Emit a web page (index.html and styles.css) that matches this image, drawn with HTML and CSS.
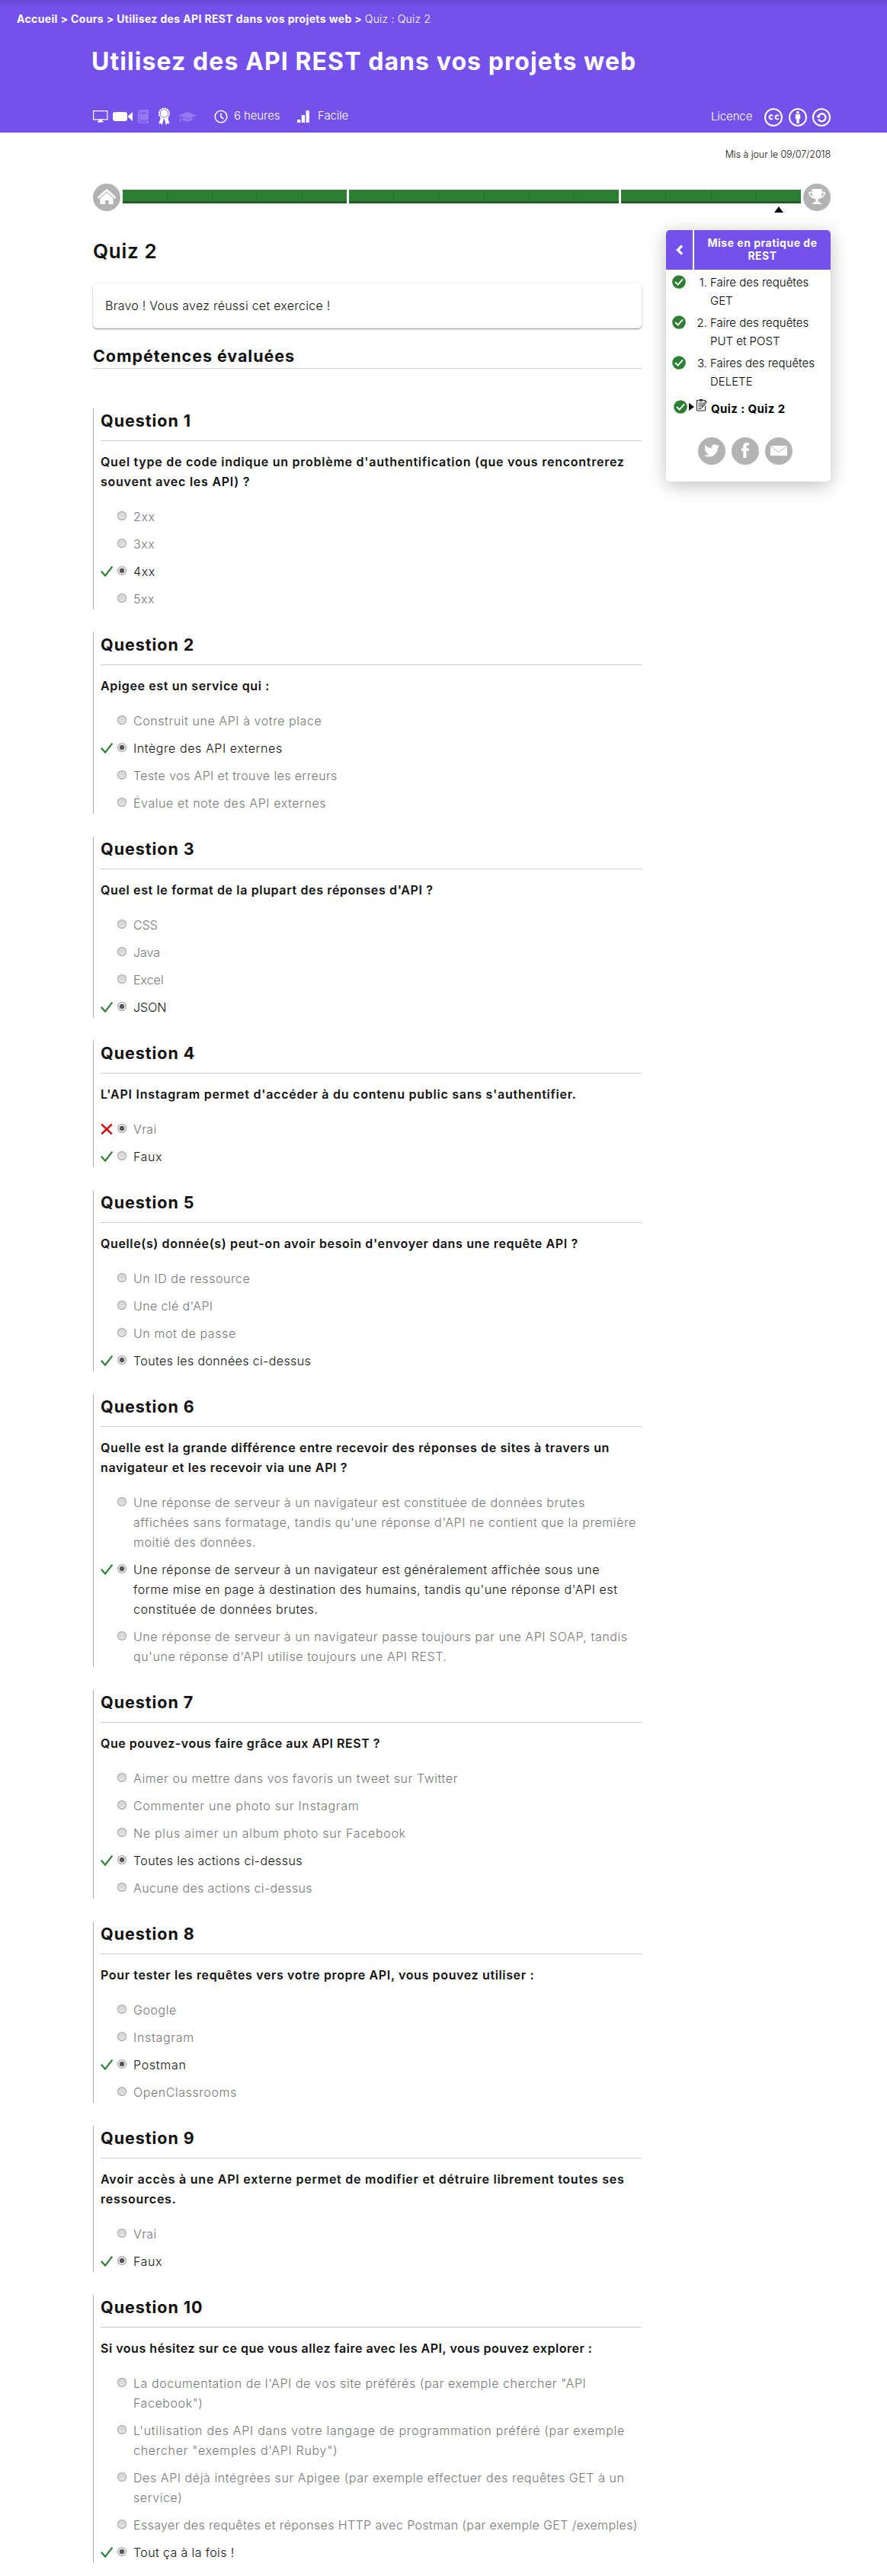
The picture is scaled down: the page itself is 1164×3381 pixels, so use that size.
FILE: index.html
```html
<!DOCTYPE html>
<html lang="fr">
<head>
<meta charset="utf-8">
<title>Quiz 2</title>
<link rel="stylesheet" href="styles.css">
</head>
<body>
<svg class="sprite" aria-hidden="true">
  <symbol id="check" viewBox="0 0 16 14"><path d="M.8 6.8 6 12.600 15.400.6" fill="none" stroke="#2c7f32" stroke-width="2.200"/></symbol>
  <symbol id="cross" viewBox="0 0 16 14"><path d="M1.200.6 14.800 13.400M14.800.6 1.200 13.400" fill="none" stroke="#d30d0d" stroke-width="2.600"/></symbol>
  <symbol id="done" viewBox="0 0 18 18"><circle cx="9" cy="9" r="8.800" fill="#2c7f32"/><path d="m4 9 3.700 3.600L14 5.400" fill="none" stroke="#fff" stroke-width="1.900"/></symbol>
</svg>
<header class="hero">
  <nav class="crumbs"><b>Accueil &gt; Cours &gt; Utilisez des API REST dans vos projets web &gt; </b><span>Quiz : Quiz 2</span></nav>
  <h1 class="course-title">Utilisez des API REST dans vos projets web</h1>
  <div class="meta">
    <svg width="20" height="18" viewBox="0 0 20 18"><path d="M.6 1.600h18.300v11.200H.6z" fill="none" stroke="#fff" stroke-width="1.200"/><path d="M7.500 13h4.500v2h1.500v1.500H6V15h1.500z" fill="#fff"/></svg>
    <svg class="m-video" width="27" height="12" viewBox="0 0 27 12"><rect width="19" height="12" rx="3" fill="#fff"/><path d="M26 0v12l-6-5.500v-1z" fill="#fff"/></svg>
    <svg class="m-book" width="15" height="18" viewBox="0 0 15 18" fill="#9479f0"><path d="M2.500 0H14v13.500H2.500z"/><path d="M0 2.500Q0 0 2 0v14.500H0z"/><path d="M4.500 3.500h6.500v1.800H4.500z" fill="#7451eb"/><path d="M0 14.500h14V18H2q-2 0-2-2zm2 1v1.300h10v-1.300z" fill-rule="evenodd"/></svg>
    <svg class="m-award" width="18" height="24" viewBox="0 0 18 24"><path d="M4 13 1.200 21.500l2.800-.7L5.500 23.500 8.200 14.500h.6l2 9 1.700-2.700 3 .7L13 13z" fill="#fff"/><circle cx="8.500" cy="8" r="6.400" fill="#fff"/><circle cx="8.500" cy="8" r="6.800" fill="none" stroke="#fff" stroke-width="1.600" stroke-dasharray="2.500 1.060"/><circle cx="8.500" cy="8" r="5.200" fill="none" stroke="#7451eb" stroke-width=".8"/></svg>
    <svg class="m-cap" width="24" height="15" viewBox="0 0 24 15" fill="#9479f0"><path d="m12 1 12 4.500L12 10 0 5.500z"/><path d="M5.500 8.300 12 10.800l6.500-2.500V12Q15 11.500 12 14 9 11.500 5.500 12zM2.500 6.500h1V12l.8 2H2z"/></svg>
    <svg class="m-clock" width="18" height="18" viewBox="0 0 18 18" fill="none" stroke="#fff" stroke-width="1.600"><circle cx="9" cy="9" r="7.800"/><path d="M9 4.500V9.500l3.200 2.500"/></svg>
    <span class="m-time">6 heures</span>
    <svg class="m-bars" width="16" height="16" viewBox="0 0 16 16" fill="#fff"><path d="M0 12h4.300v4H0zM5.800 6h4.300v10H5.800zM11.500 0h4.300v16h-4.300z"/></svg>
    <span class="m-level">Facile</span>
    <span class="m-lic">Licence</span>
    <svg class="m-cc" width="24" height="24" viewBox="0 0 24 24" fill="none" stroke="#fff" stroke-width="2"><circle cx="12" cy="12" r="11"/><path d="M11 10a2.600 2.600 0 1 0 0 3.600M19 10a2.600 2.600 0 1 0 0 3.600"/></svg>
    <svg class="m-cc" width="24" height="24" viewBox="0 0 24 24"><circle cx="12" cy="12" r="11" fill="none" stroke="#fff" stroke-width="2"/><circle cx="12" cy="5.600" r="1.900" fill="#fff"/><path d="M8.800 8h6.400v6.200h-1.500V20h-3.400v-5.800H8.800z" fill="#fff"/></svg>
    <svg class="m-cc" width="24" height="24" viewBox="0 0 24 24" fill="none" stroke="#fff"><circle cx="12" cy="12" r="11" stroke-width="2"/><path d="M8 10a5 5 0 1 1 0 4.500" stroke-width="2.400"/><path d="M5.200 10h6l-3 3.500z" fill="#fff" stroke="none"/></svg>
  </div>
</header>
<p class="updated">Mis à jour le 09/07/2018</p>
<div class="timeline">
  <svg class="t-icon" viewBox="0 0 36 36"><circle cx="18" cy="18" r="18" fill="#b3b3b3"/><path d="M18 7 30 18l-1.300 1.400L18 9.800 7.300 19.400 6 18z" fill="#fff" stroke="#fff" stroke-width="1"/><path d="m18 11.800 8.500 7.400V27h-5.800v-5h-4.800v5H9.500v-7.800z" fill="#fff"/></svg>
  <div class="part p5"><i></i><i></i><i></i><i></i><i></i></div>
  <div class="part p6"><i></i><i></i><i></i><i></i><i></i><i></i></div>
  <div class="part p4"><i></i><i></i><i></i><i class="here"></i></div>
  <svg class="t-icon" viewBox="0 0 36 36"><circle cx="18" cy="18" r="18" fill="#b3b3b3"/><path d="M11.500 7h13v5q0 7-5 8.500v3.500h2.500v1.500h2V27H12v-1.500h2V24h2.500v-3.500q-5-1.500-5-8.500z" fill="#fff"/><path d="M12 11.500H8q0 5.500 6 7M24 11.500h4q0 5.500-6 7" fill="none" stroke="#fff" stroke-width="1.700"/></svg>
</div>
<div class="columns">
<main class="quiz">
  <h2 class="quiz-title">Quiz 2</h2>
  <div class="notice">Bravo ! Vous avez réussi cet exercice !</div>
  <h3 class="skills">Compétences évaluées</h3>

  <section class="question">
    <h3>Question 1</h3>
    <p class="wide">Quel type de code indique un problème d'authentification (que vous rencontrerez<br>souvent avec les API) ?</p>
    <ul>
      <li><i class="radio"></i><span>2xx</span></li>
      <li><i class="radio"></i><span>3xx</span></li>
      <li class="good"><svg><use href="#check"/></svg><i class="radio on"></i><span>4xx</span></li>
      <li><i class="radio"></i><span>5xx</span></li>
    </ul>
  </section>

  <section class="question">
    <h3>Question 2</h3>
    <p>Apigee est un service qui :</p>
    <ul>
      <li><i class="radio"></i><span>Construit une API à votre place</span></li>
      <li class="good"><svg><use href="#check"/></svg><i class="radio on"></i><span>Intègre des API externes</span></li>
      <li class="snug"><i class="radio"></i><span>Teste vos API et trouve les erreurs</span></li>
      <li><i class="radio"></i><span>Évalue et note des API externes</span></li>
    </ul>
  </section>

  <section class="question">
    <h3>Question 3</h3>
    <p>Quel est le format de la plupart des réponses d'API ?</p>
    <ul class="short">
      <li><i class="radio"></i><span>CSS</span></li>
      <li><i class="radio"></i><span>Java</span></li>
      <li><i class="radio"></i><span>Excel</span></li>
      <li class="good"><svg><use href="#check"/></svg><i class="radio on"></i><span>JSON</span></li>
    </ul>
  </section>

  <section class="question">
    <h3>Question 4</h3>
    <p class="wide">L'API Instagram permet d'accéder à du contenu public sans s'authentifier.</p>
    <ul>
      <li class="snug"><svg><use href="#cross"/></svg><i class="radio on"></i><span>Vrai</span></li>
      <li class="good"><svg><use href="#check"/></svg><i class="radio"></i><span>Faux</span></li>
    </ul>
  </section>

  <section class="question">
    <h3>Question 5</h3>
    <p>Quelle(s) donnée(s) peut-on avoir besoin d'envoyer dans une requête API ?</p>
    <ul>
      <li><i class="radio"></i><span>Un ID de ressource</span></li>
      <li class="snug"><i class="radio"></i><span>Une clé d'API</span></li>
      <li><i class="radio"></i><span>Un mot de passe</span></li>
      <li class="good snug"><svg><use href="#check"/></svg><i class="radio on"></i><span>Toutes les données ci-dessus</span></li>
    </ul>
  </section>

  <section class="question">
    <h3>Question 6</h3>
    <p>Quelle est la grande différence entre recevoir des réponses de sites à travers un<br>navigateur et les recevoir via une API ?</p>
    <ul>
      <li><i class="radio"></i><span>Une réponse de serveur à un navigateur est constituée de données brutes<br>affichées sans formatage, tandis qu'une réponse d'API ne contient que la première<br>moitié des données.</span></li>
      <li class="good"><svg><use href="#check"/></svg><i class="radio on"></i><span>Une réponse de serveur à un navigateur est généralement affichée sous une<br>forme mise en page à destination des humains, tandis qu'une réponse d'API est<br>constituée de données brutes.</span></li>
      <li><i class="radio"></i><span>Une réponse de serveur à un navigateur passe toujours par une API SOAP, tandis<br>qu'une réponse d'API utilise toujours une API REST.</span></li>
    </ul>
  </section>

  <section class="question">
    <h3>Question 7</h3>
    <p class="snug">Que pouvez-vous faire grâce aux API REST ?</p>
    <ul>
      <li><i class="radio"></i><span>Aimer ou mettre dans vos favoris un tweet sur Twitter</span></li>
      <li class="wide"><i class="radio"></i><span>Commenter une photo sur Instagram</span></li>
      <li class="wide"><i class="radio"></i><span>Ne plus aimer un album photo sur Facebook</span></li>
      <li class="good snug"><svg><use href="#check"/></svg><i class="radio on"></i><span>Toutes les actions ci-dessus</span></li>
      <li class="snug"><i class="radio"></i><span>Aucune des actions ci-dessus</span></li>
    </ul>
  </section>

  <section class="question">
    <h3>Question 8</h3>
    <p>Pour tester les requêtes vers votre propre API, vous pouvez utiliser :</p>
    <ul>
      <li><i class="radio"></i><span>Google</span></li>
      <li class="wide"><i class="radio"></i><span>Instagram</span></li>
      <li class="good wide"><svg><use href="#check"/></svg><i class="radio on"></i><span>Postman</span></li>
      <li><i class="radio"></i><span>OpenClassrooms</span></li>
    </ul>
  </section>

  <section class="question">
    <h3>Question 9</h3>
    <p class="wide">Avoir accès à une API externe permet de modifier et détruire librement toutes ses<br>ressources.</p>
    <ul>
      <li class="snug"><i class="radio"></i><span>Vrai</span></li>
      <li class="good"><svg><use href="#check"/></svg><i class="radio on"></i><span>Faux</span></li>
    </ul>
  </section>

  <section class="question">
    <h3>Question 10</h3>
    <p class="snug">Si vous hésitez sur ce que vous allez faire avec les API, vous pouvez explorer :</p>
    <ul>
      <li><i class="radio"></i><span>La documentation de l'API de vos site préférés (par exemple chercher "API<br>Facebook")</span></li>
      <li class="wide"><i class="radio"></i><span>L'utilisation des API dans votre langage de programmation préféré (par exemple<br>chercher "exemples d'API Ruby")</span></li>
      <li><i class="radio"></i><span>Des API déjà intégrées sur Apigee (par exemple effectuer des requêtes GET à un<br>service)</span></li>
      <li class="snug"><i class="radio"></i><span>Essayer des requêtes et réponses HTTP avec Postman (par exemple GET /exemples)</span></li>
      <li class="good snug"><svg><use href="#check"/></svg><i class="radio on"></i><span>Tout ça à la fois !</span></li>
    </ul>
  </section>
</main>
<aside class="chapter">
  <div class="chapter-head">
    <span class="prev"><svg width="10" height="14" viewBox="0 0 10 14"><path d="M8 1.500 2.500 7 8 12.500" fill="none" stroke="#fff" stroke-width="3.200"/></svg></span>
    <strong>Mise en pratique de<br>REST</strong>
  </div>
  <ol>
    <li><svg><use href="#done"/></svg><em>1.</em><span>Faire des requêtes<br>GET</span></li>
    <li><svg><use href="#done"/></svg><em>2.</em><span>Faire des requêtes<br>PUT et POST</span></li>
    <li><svg><use href="#done"/></svg><em>3.</em><span>Faires des requêtes<br>DELETE</span></li>
  </ol>
  <div class="current">
    <svg width="18" height="18"><use href="#done"/></svg>
    <svg class="arrow" width="7" height="10" viewBox="0 0 7 10"><path d="M0 0 7 5 0 10z"/></svg>
    <svg class="doc" width="14" height="17" viewBox="0 0 14 17" fill="none" stroke="#222"><path d="M.5 2.500H3M9 2.500h2.500v2M.5 2v14h11v-6"/><path d="M3.500 2.300h5" stroke-width="2.600"/><path d="M2.500 6h6M2.500 8.500h5M2.500 11h4M2.500 13.500h4" stroke-width="1"/><path d="m7 12 .8-3L12 3l1.600 1.300-4.300 6z" stroke-width=".9" fill="#bbb"/></svg>
    <b>Quiz : Quiz 2</b>
  </div>
  <div class="share">
    <svg viewBox="0 0 36 36"><circle cx="18" cy="18" r="18" fill="#b3b3b3"/><path transform="translate(8 7.500) scale(.83)" fill="#fff" d="M23.950 4.570a10 10 0 0 1-2.820.77 4.960 4.960 0 0 0 2.160-2.720c-.95.550-2 .95-3.130 1.180a4.920 4.920 0 0 0-8.380 4.480C7.690 8.100 4.070 6.130 1.640 3.160a4.820 4.820 0 0 0-.67 2.480c0 1.710.87 3.210 2.190 4.100a4.900 4.900 0 0 1-2.230-.62v.06a4.920 4.920 0 0 0 3.950 4.830 5 5 0 0 1-2.210.08 4.940 4.940 0 0 0 4.600 3.420A9.870 9.870 0 0 1 0 19.540a13.990 13.990 0 0 0 7.550 2.210c9.050 0 14-7.500 14-13.980 0-.21 0-.42-.02-.63a9.940 9.940 0 0 0 2.460-2.550z"/></svg>
    <svg viewBox="0 0 36 36"><circle cx="18" cy="18" r="18" fill="#b3b3b3"/><path fill="#fff" d="M15.400 27v-9.300H13v-3.500h2.400v-2.700Q15.400 7 19.800 7H23v3.600h-2q-1.600 0-1.600 1.500v2.100h3.500l-.4 3.500h-3.100V27z"/></svg>
    <svg viewBox="0 0 36 36"><circle cx="18" cy="18" r="18" fill="#b3b3b3"/><path fill="#fff" d="M7 11h22v13H7z"/><path d="m7 11.500 11 8 11-8" fill="none" stroke="#b3b3b3"/></svg>
  </div>
</aside>
</div>
</body>
</html>
```
FILE: styles.css
```css
* { box-sizing: border-box; }
body, h1, h2, h3, p, ul, ol { margin: 0; padding: 0; }
body {
  width: 1164px;
  height: 3381px;
  background: #fff;
  color: #111;
  font: 300 16px/26px Inter, "Open Sans", sans-serif;
  white-space: nowrap;
}
ul, ol { list-style: none; }
i, em { font-style: normal; }
.sprite { position: absolute; width: 0; height: 0; }

.hero {
  height: 174px;
  background: linear-gradient(rgba(0,0,0,.12), rgba(0,0,0,0) 6px), #7451eb;
  color: #fff;
}
.crumbs { padding: 13px 0 0 22px; height: 60px; font-size: 14px; line-height: 24px; white-space: pre; letter-spacing: .2px; }
.crumbs b { font-weight: 700; letter-spacing: .36px; }
.course-title { padding-left: 120px; height: 75px; font-size: 32px; line-height: 41px; font-weight: 700; letter-spacing: 1.070px; }
.meta { display: flex; align-items: center; height: 36px; padding-left: 122px; font-size: 15px; letter-spacing: -.1px; }
.m-video { margin-left: 6px; }
.m-book { margin-left: 6px; }
.m-award { margin-left: 11px; }
.m-cap { margin-left: 9px; }
.m-clock { margin-left: 23px; }
.m-time { width: 60px; margin: -2px 0 0 8px; }
.m-bars { margin-left: 23px; }
.m-level { margin: -2px 0 0 11px; width: 516px; }
.m-lic { width: 70px; }
.meta svg { flex: none; }
.m-cc { margin-top: 2px; }
.m-cc + .m-cc { margin-left: 7.500px; }

.updated { height: 67px; padding: 16px 74px 0 0; text-align: right; font-size: 12.500px; letter-spacing: -.08px; }
.timeline { display: flex; align-items: center; gap: 3px; padding-left: 122px; height: 36px; }
.t-icon { width: 36px; height: 36px; flex: none; }
.part { display: flex; height: 18px; background: #2c7f32; border-bottom: 3px solid #235d27; margin-top: -2px; }
.part i { position: relative; flex: 1; }
.part i + i { border-left: 1px solid #27702c; }
.p5 { width: 294px; }
.p6 { width: 354px; }
.p4 { width: 236px; }
.here::after { content: ""; position: absolute; left: 50%; top: 22px; margin-left: -6px; border: 6px solid transparent; border-top: 0; border-bottom: 8px solid #000; }

.columns { display: flex; align-items: flex-start; gap: 32px; padding-left: 122px; }
.quiz { width: 720px; }
.quiz-title { padding-top: 37px; height: 95px; font-size: 26px; line-height: 32px; font-weight: 600; letter-spacing: .7px; }
.notice { height: 59px; padding: 16px; border-radius: 5px; box-shadow: 0 1px 3px rgba(0,0,0,.25), 0 1px 1px rgba(0,0,0,.25); letter-spacing: .26px; }
.skills { height: 53px; margin-bottom: 52px; padding-top: 24px; border-bottom: 1px solid #ccc; }
.question { margin-bottom: 30px; padding: 0 0 1px 9px; border-left: 1px solid #b0b0b0; }
.question h3 { height: 43px; padding-top: 4px; border-bottom: 1px solid #ccc; }
.skills, .question h3 { font-size: 21.500px; line-height: 24px; font-weight: 700; letter-spacing: .95px; }
.question p { padding: 14px 0 20px; font-weight: 600; letter-spacing: .64px; }
.question p.wide { letter-spacing: .75px; }
.question p.snug { letter-spacing: .53px; }
.question ul { display: grid; gap: 10px; }
.question li { display: grid; grid-template-columns: 22px 21px 1fr; color: #777; letter-spacing: .57px; }
.question li.wide { letter-spacing: .7px; }
.question li.snug { letter-spacing: .38px; }
.question .short li { letter-spacing: 0; }
.question li.good { color: #111; }
.question li svg { width: 16px; height: 14px; margin-top: 6px; }
.question li span { grid-column: 3; }
.radio { grid-column: 2; width: 12px; height: 12px; margin-top: 6px; border-radius: 50%; background: linear-gradient(#d2d2d2, #e4e4e4); box-shadow: inset 0 0 0 1px #a6a6a6; }
.radio.on { background: radial-gradient(circle at 6px 6px, #555 2.800px, #e4e4e4 3.600px); }

.chapter { width: 216px; height: 330px; margin-top: 25px; border-radius: 5px; background: #fff; box-shadow: 0 5px 25px rgba(0,0,0,.25); font-size: 15px; line-height: 24px; }
.chapter-head { display: grid; grid-template-columns: 35px 1fr; gap: 2px; height: 52px; color: #fff; }
.prev { display: grid; place-items: center; border-radius: 5px 0 0; background: #7451eb; }
.chapter-head strong { padding-top: 8px; border-radius: 0 5px 0 0; background: #7451eb; text-align: center; font-size: 14px; line-height: 17px; font-weight: 700; letter-spacing: .5px; }
.chapter ol { display: grid; gap: 5px; padding: 5px 0 0 8px; }
.chapter li { display: grid; grid-template-columns: 18px 28px 1fr; color: #000; }
.chapter li svg { width: 18px; height: 18px; margin-top: 2px; }
.chapter em { text-align: right; }
.chapter li span { padding-left: 4px; }
.current { display: flex; align-items: center; height: 42px; padding-left: 10px; }
.current .arrow { margin-left: 2px; }
.current .doc { margin-left: 3px; margin-top: -5px; }
.current b { margin: 5px 0 0 5px; font-weight: 700; color: #000; letter-spacing: .4px; }
.share { display: flex; gap: 8px; padding: 19px 0 0 42px; }
.share svg { width: 36px; height: 36px; }
```
